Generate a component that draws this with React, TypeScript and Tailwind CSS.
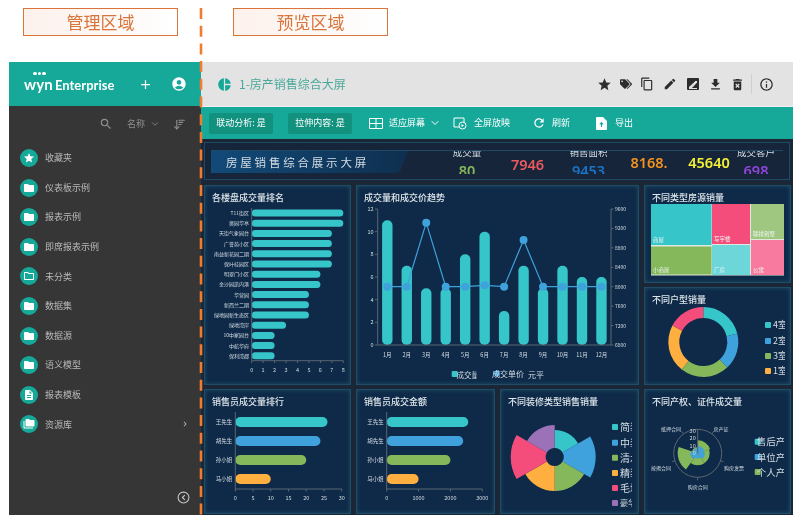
import type { ReactNode } from "react";
import {
  MdAdd,
  MdAccountCircle,
  MdSearch,
  MdStar,
  MdFolder,
  MdOutlineFolder,
  MdDescription,
  MdFolderCopy,
  MdPieChart,
  MdContentCopy,
  MdEdit,
  MdFileDownload,
  MdDeleteForever,
  MdInfoOutline,
  MdRefresh,
  MdChevronRight,
} from "react-icons/md";
import { FaTags } from "react-icons/fa";
import { ChevronDown, CircleChevronLeft, ArrowDownWideNarrow } from "lucide-react";

const TEAL = "#36c5c8";
const BLUE = "#3fa2dc";
const GREEN = "#85b85a";
const ORANGE = "#ffaf40";
const PINK = "#f54d7b";
const PURPLE = "#9b72b8";
const AXIS = "#5b6670";
const LABEL = "#d5dde4";

const sideItems = [
  { name: "收藏夹", icon: <MdStar size={12} /> },
  { name: "仪表板示例", icon: <MdFolder size={12} /> },
  { name: "报表示例", icon: <MdFolder size={12} /> },
  { name: "即席报表示例", icon: <MdFolder size={12} /> },
  { name: "未分类", icon: <MdOutlineFolder size={12} /> },
  { name: "数据集", icon: <MdFolder size={12} /> },
  { name: "数据源", icon: <MdFolder size={12} /> },
  { name: "语义模型", icon: <MdFolder size={12} /> },
  { name: "报表模板", icon: <MdDescription size={12} /> },
  { name: "资源库", icon: <MdFolderCopy size={12} />, arrow: true },
];

const Sidebar = () => (
  <aside className="w-[192px] bg-[#363636] flex flex-col">
    <div className="h-[44px] bg-[#16a899] flex items-center pl-[15px] text-white">
      <div className="w-[90px] flex items-end font-['Lato',sans-serif] font-bold leading-none relative">
        <span className="text-[15px] tracking-[0.2px]">wyn</span>
        <span className="text-[13px] ml-[2px] font-bold">Enterprise</span>
        <span className="absolute left-[9px] top-[-5px] flex gap-[1px]">
          <i className="w-[3.5px] h-[3.5px] rounded-full bg-white" />
          <i className="w-[3.5px] h-[3.5px] rounded-full bg-white" />
          <i className="w-[3.5px] h-[3.5px] rounded-full bg-white" />
        </span>
      </div>
      <MdAdd size={15} className="ml-[24px]" />
      <MdAccountCircle size={16} className="ml-[18px]" />
    </div>

    <div className="h-[36px] flex items-center text-[#8f8f8f] text-[9px] pl-[90px]">
      <MdSearch size={14} />
      <span className="ml-[14px]">名称</span>
      <ChevronDown size={10} className="ml-[5px]" />
      <ArrowDownWideNarrow size={13} className="ml-[13px]" />
    </div>

    <div className="flex flex-col pl-[11px] mt-[7px] gap-[11.6px]">
      {sideItems.map((item) => (
        <div key={item.name} className="h-[18px] flex items-center text-[9px] text-[#b9b9b9]">
          <span className="w-[18px] h-[18px] rounded-full bg-[#16a899] text-white flex items-center justify-center">
            {item.icon}
          </span>
          <span className="ml-[7px]">{item.name}</span>
          {item.arrow && <MdChevronRight size={10} className="ml-auto mr-[11px]" />}
        </div>
      ))}
    </div>

    <div className="mt-auto flex justify-end pr-[11px] pb-[11px] text-[#c5c5c5]">
      <CircleChevronLeft size={13} />
    </div>
  </aside>
);

const TopBar = () => (
  <div className="h-[44px] bg-[#e3e3e3] flex items-center pl-[16px] text-[#2d2d2d]">
    <MdPieChart size={15} className="text-[#16a899]" />
    <span className="ml-[7px] text-[12px] text-[#4aa99c]">1-房产销售综合大屏</span>
    <div className="ml-auto flex items-center pr-[19px]">
      <MdStar size={15} />
      <FaTags size={12} className="ml-[8px]" />
      <MdContentCopy size={14} className="ml-[8px]" />
      <MdEdit size={14} className="ml-[9px]" />
      <svg width="12" height="12" viewBox="0 0 12 12" className="ml-[10px]">
        <rect width="12" height="12" rx="1" fill="#2d2d2d" />
        <path d="M2 9.5 9 3l1 1-5 5.5zM2 10.5h8" stroke="#e3e3e3" strokeWidth="1" fill="#e3e3e3" />
      </svg>
      <MdFileDownload size={15} className="ml-[9px]" />
      <MdDeleteForever size={15} className="ml-[7px]" />
      <span className="w-px h-[20px] bg-[#cfcfcf] ml-[6px]" />
      <MdInfoOutline size={15} className="ml-[7px]" />
    </div>
  </div>
);

const ToolButton = ({ text }: { text: string }) => (
  <span className="h-[21px] w-[64px] rounded-[2px] bg-[#12917f] flex items-center justify-center text-[9px] text-white">
    {text}
  </span>
);

const ToolBar = () => (
  <div className="h-[33px] bg-[#16a899] flex items-center pl-[8px] text-white text-[9px] border-t border-[#f0f0f0]">
    <ToolButton text="联动分析: 是" />
    <span className="ml-[15px]">
      <ToolButton text="拉伸内容: 是" />
    </span>
    <svg width="14" height="11" viewBox="0 0 14 11" fill="none" stroke="white" className="ml-[17px]">
      <path d="M.5.5h13v10H.5zM.5 5.5h13M7 .5v10" strokeWidth="1" />
    </svg>
    <span className="ml-[6px]">适应屏幕</span>
    <ChevronDown size={12} className="ml-[4px]" />
    <svg width="14" height="14" viewBox="0 0 14 14" fill="none" stroke="white" className="ml-[12px]">
      <path d="M6 11H1V2h10v4" strokeWidth="1" />
      <circle cx="9.5" cy="9.5" r="3.5" strokeWidth="1" />
      <path d="M8.5 8v3l2.5-1.5z" fill="white" stroke="none" />
    </svg>
    <span className="ml-[7px]">全屏放映</span>
    <MdRefresh size={14} className="ml-[22px]" />
    <span className="ml-[6px]">刷新</span>
    <svg width="11" height="13" viewBox="0 0 11 13" className="ml-[26px]">
      <path d="M0 1q0-1 1-1h6l4 4v8q0 1-1 1H1q-1 0-1-1z" fill="white" />
      <path d="M5.5 10V6M3.8 7.5 5.5 5.5l1.7 2" stroke="#16a899" strokeWidth="1.1" fill="none" />
    </svg>
    <span className="ml-[8px]">导出</span>
  </div>
);

const Stat = ({ w, label, value, color, big }: { w: string; label?: string; value: string; color: string; big?: boolean }) => (
  <div className={`${w} flex flex-col items-center shrink-0`}>
    {label ? (
      <>
        <span className="text-[9.5px] leading-[9px] mt-[-3px] whitespace-nowrap text-[#d5dde4]">{label}</span>
        <span className="text-[14.5px] leading-[14px] mt-[6px] font-semibold" style={{ color }}>
          {value}
        </span>
      </>
    ) : (
      <span className={`text-[14.5px] leading-[16px] font-semibold ${big ? "mt-[3px]" : "mt-[5px]"}`} style={{ color }}>
        {value}
      </span>
    )}
  </div>
);

const Banner = () => (
  <div className="h-[38px] border border-[#1e4a66] bg-[#16253a] px-[6px] pt-[7px] relative">
    <div className="border-t border-[#1e4a66] h-[24px] flex overflow-hidden">
      <div className="relative w-[197px] h-[24px] shrink-0 flex items-center pl-[15px] text-[11.5px] tracking-[2.8px] text-[#d5dde4]">
        <svg viewBox="0 0 197 24" width="197" height="24" className="absolute left-0 top-0">
          <defs>
            <linearGradient id="bannerFill" x1="0" x2="1" y1="0" y2="0">
              <stop offset="0" stopColor="#124a78" />
              <stop offset="1" stopColor="#0f2f4f" />
            </linearGradient>
          </defs>
          <path d="M0 0h197l-7 18q-2 4-7 4H0z" fill="url(#bannerFill)" />
        </svg>
        <span className="relative">房屋销售综合展示大屏</span>
      </div>
      <div className="flex pl-[29px] font-['Noto_Sans','Noto_Sans_CJK_SC',sans-serif]">
        <Stat w="w-[60px]" label="成交量" value="80" color={GREEN} />
        <Stat w="w-[61px]" value="7946" color="#ea5a5f" />
        <Stat w="w-[61px]" label="销售面积" value="9453" color="#1a74c8" />
        <Stat w="w-[60px]" value="8168." color="#f5911e" big />
        <Stat w="w-[60px]" value="45640" color="#f4f034" big />
        <Stat w="w-[34px]" label="成交客户" value="698" color="#9044d8" />
      </div>
    </div>
  </div>
);

type Box = [number, number, number, number];

const Panel = ({ box, title, children }: { box: Box; title: string; children: ReactNode }) => {
  const [x, y, w, h] = box;
  return (
    <div
      className="border border-[#1f4d68] bg-[#0e2a48] flex flex-col shadow-[inset_0_0_4px_#1f5068] overflow-hidden shrink-0"
      style={{ width: w, height: h }}
    >
      <div className="h-[22px] shrink-0 pl-[7px] pt-[6px] text-[9px] leading-[12px] font-medium text-[#dfe6ea]">{title}</div>
      <svg width={w - 2} height={h - 24} viewBox={`${x + 1} ${y + 23} ${w - 2} ${h - 24}`} className="block overflow-visible">
        {children}
      </svg>
    </div>
  );
};

const hbar = (x0: number, y: number, w: number, h: number, color: string) => (
  <rect x={x0} y={y - h / 2} width={w} height={h} rx={h / 2} fill={color} />
);

const rankNames = [
  "T11街区", "奥园华亭", "天街气象园台", "广誉苑小区", "南益新花园二期", "保叶桂园区", "明翠门小区", "金沙园凯内港",
  "华营园", "新西兰二期", "绿地园新生态区", "绿地湾岸", "10中家园台", "中航华府", "保利湾郡",
];
const rankValues = [8, 8, 7, 7, 7, 7, 6, 6, 5, 5, 5, 3, 2, 2, 2];

const RankChart = () => (
  <Panel box={[204, 185, 147, 200]} title="各楼盘成交量排名">
    {rankValues.map((v, i) => {
      const y = 213 + i * 10.2;
      return (
        <g key={i}>
          <text x={249} y={y + 2} textAnchor="end" fontSize="5" fill={LABEL}>{rankNames[i]}</text>
          {hbar(251.7, y, v * 11.45, 7, TEAL)}
        </g>
      );
    })}
    <line x1={251.7} y1={360.7} x2={343.3} y2={360.7} stroke={AXIS} />
    <line x1={251.7} y1={208} x2={251.7} y2={360.7} stroke={AXIS} />
    {Array.from({ length: 9 }, (_, i) => (
      <g key={i}>
        <line x1={251.7 + i * 11.45} y1={360.7} x2={251.7 + i * 11.45} y2={363} stroke={AXIS} />
        <text x={251.7 + i * 11.45} y={372} textAnchor="middle" fontSize="5.5" fill={LABEL}>{i}</text>
      </g>
    ))}
  </Panel>
);

const trendBars = [11, 7, 5, 5, 8, 10, 3, 7, 5, 7, 6, 6];
const trendLine = [286.7, 286.7, 222.7, 286.7, 286.7, 285.3, 286.7, 240, 286.7, 286.7, 286.7, 286.7];

const TrendChart = () => {
  const cx = (i: number) => 387.3 + i * 19.47;
  const unit = (345 - 209) / 12;
  return (
    <Panel box={[356, 185, 283, 200]} title="成交量和成交价趋势">
      {trendBars.map((v, i) => (
        <rect key={i} x={cx(i) - 5.2} y={345 - v * unit} width={10.4} height={v * unit} rx={5} fill={TEAL} />
      ))}
      <polyline points={trendLine.map((y, i) => `${cx(i)},${y}`).join(" ")} fill="none" stroke={BLUE} strokeWidth="1.2" />
      {trendLine.map((y, i) => (
        <circle key={i} cx={cx(i)} cy={y} r={4} fill={BLUE} />
      ))}
      <path d="M377.7 209V345H611V209" fill="none" stroke={AXIS} />
      {Array.from({ length: 7 }, (_, i) => (
        <g key={i}>
          <line x1={375} x2={377.7} y1={345 - i * 2 * unit} y2={345 - i * 2 * unit} stroke={AXIS} />
          <text x={373.5} y={347 - i * 2 * unit} textAnchor="end" fontSize="5.5" fill={LABEL}>{i * 2}</text>
        </g>
      ))}
      {["6800", "7200", "7600", "8000", "8400", "8800", "9200", "9600"].map((t, i) => (
        <g key={t}>
          <line x1={611} x2={613.5} y1={345 - (i * 136) / 7} y2={345 - (i * 136) / 7} stroke={AXIS} />
          <text x={615} y={347 - (i * 136) / 7} fontSize="5" fill={LABEL}>{t}</text>
        </g>
      ))}
      {trendBars.map((_, i) => (
        <text key={i} x={cx(i)} y={357} textAnchor="middle" fontSize="5.5" fill={LABEL}>{i + 1}月</text>
      ))}
      <rect x={451.7} y={371} width={6} height={6} rx={1} fill={TEAL} />
      <text x={456.5} y={377.5} fontSize="7.5" fill={LABEL}>成交量</text>
      <rect x={476.5} y={368} width={14} height={12} fill="#0e2a48" />
      <circle cx={497} cy={373.5} r={3} fill={BLUE} />
      <text x={492} y={377} fontSize="8" fill={LABEL}>成交单价</text>
      <text x={528} y={377.5} fontSize="8" fill={LABEL}>元平</text>
    </Panel>
  );
};

const TreeCell = ({ x, y, w, h, color, label }: { x: number; y: number; w: number; h: number; color: string; label: string }) => (
  <g>
    <rect x={x} y={y} width={w} height={h} fill={color} />
    <text x={x + 2} y={y + h - 3} fontSize="5.5" fill="#eef5f5">{label}</text>
  </g>
);

const TreeChart = () => (
  <Panel box={[644, 185, 147, 98]} title="不同类型房源销量">
    <rect x={651} y={204} width={133} height={71.5} fill="#dfe8dd" />
    <TreeCell x={651} y={204} w={60.5} h={41} color={TEAL} label="商屋" />
    <TreeCell x={651} y={246.5} w={60.5} h={28} color={GREEN} label="小商屋" />
    <TreeCell x={712} y={204} w={38} h={40} color={PINK} label="写字楼" />
    <TreeCell x={712} y={245} w={38} h={30} color="#6cd6d8" label="厂房" />
    <TreeCell x={751} y={204} w={33} h={35} color="#a0c77f" label="联排别墅" />
    <TreeCell x={751} y={240} w={33} h={35} color="#f87a9e" label="公寓" />
  </Panel>
);

const polar = (cx: number, cy: number, r: number, deg: number) => {
  const a = ((deg - 90) * Math.PI) / 180;
  return [cx + r * Math.cos(a), cy + r * Math.sin(a)];
};

const sector = (cx: number, cy: number, r0: number, r1: number, a0: number, a1: number) => {
  const [x1, y1] = polar(cx, cy, r1, a0);
  const [x2, y2] = polar(cx, cy, r1, a1);
  const [x3, y3] = polar(cx, cy, r0, a1);
  const [x4, y4] = polar(cx, cy, r0, a0);
  return `M${x1} ${y1}A${r1} ${r1} 0 0 1 ${x2} ${y2}L${x3} ${y3}A${r0} ${r0} 0 0 0 ${x4} ${y4}Z`;
};

const Legend = ({ x, y, color, text, clip, size = 8, dx = 8 }: { x: number; y: number; color: string; text: string; clip: number; size?: number; dx?: number }) => (
  <g>
    <rect x={x} y={y - 3} width={6} height={6} rx={1} fill={color} />
    <svg x={x} y={y - 8} width={clip - x} height={16} viewBox={`${x} ${y - 8} ${clip - x} 16`}>
      <text x={x + dx} y={y + size * 0.38} fontSize={size} fill={LABEL}>{text}</text>
    </svg>
  </g>
);

const DonutChart = () => (
  <Panel box={[644, 287, 147, 98]} title="不同户型销量">
    <path d={sector(703.3, 342, 24, 35, 0, 76)} fill={TEAL} />
    <path d={sector(703.3, 342, 24, 35, 76, 137)} fill={BLUE} />
    <path d={sector(703.3, 342, 24, 35, 137, 218)} fill={GREEN} />
    <path d={sector(703.3, 342, 24, 35, 218, 298)} fill={ORANGE} />
    <path d={sector(703.3, 342, 24, 35, 298, 360)} fill={PINK} />
    <Legend x={765} y={325} color={TEAL} text="4室" clip={785} size={9} />
    <Legend x={765} y={341} color={BLUE} text="2室" clip={785} size={9} />
    <Legend x={765} y={356} color={GREEN} text="3室" clip={785} size={9} />
    <Legend x={765} y={371} color={ORANGE} text="1室" clip={785} size={9} />
  </Panel>
);

const salesNames = ["王先生", "胡先生", "孙小姐", "马小姐"];
const salesColors = [TEAL, BLUE, GREEN, ORANGE];

const SalesChart = ({ box, title, x0, x1, values, ticks, max }: { box: Box; title: string; x0: number; x1: number; values: number[]; ticks: number[]; max: number }) => (
  <Panel box={box} title={title}>
    {values.map((v, i) => {
      const y = 422 + i * 19;
      return (
        <g key={i}>
          <text x={x0 - 3} y={y + 2} textAnchor="end" fontSize="5.5" fill={LABEL}>{salesNames[i]}</text>
          {hbar(x0, y, (v / max) * (x1 - x0), 10, salesColors[i])}
        </g>
      );
    })}
    <path d={`M${x0} 412V489H${x1}`} fill="none" stroke={AXIS} />
    {ticks.map((t) => {
      const x = x0 + (t / max) * (x1 - x0);
      return (
        <g key={t}>
          <line x1={x} x2={x} y1={489} y2={491.5} stroke={AXIS} />
          <text x={x} y={500} textAnchor="middle" fontSize="5.5" fill={LABEL}>{t}</text>
        </g>
      );
    })}
  </Panel>
);

const RoseChart = () => (
  <Panel box={[500, 389, 139, 125]} title="不同装修类型销售销量">
    <path d={sector(554.7, 457, 9, 27, 0, 60)} fill={TEAL} />
    <path d={sector(554.7, 457, 9, 41, 60, 120)} fill={BLUE} />
    <path d={sector(554.7, 457, 9, 34, 120, 180)} fill={GREEN} />
    <path d={sector(554.7, 457, 9, 34, 180, 240)} fill={ORANGE} />
    <path d={sector(554.7, 457, 9, 44, 240, 300)} fill={PINK} />
    <path d={sector(554.7, 457, 9, 32, 300, 360)} fill={PURPLE} />
    <Legend x={612} y={427} color={TEAL} text="简装" clip={632} size={10} />
    <Legend x={612} y={442.7} color={BLUE} text="中装" clip={632} size={10} />
    <Legend x={612} y={457.7} color={GREEN} text="清水" clip={632} size={10} />
    <Legend x={612} y={473} color={ORANGE} text="精装" clip={632} size={10} />
    <Legend x={612} y={488} color={PINK} text="毛坯" clip={632} size={10} />
    <Legend x={612} y={503} color={PURPLE} text="豪华" clip={632} size={8} />
  </Panel>
);

const PolarChart = () => {
  const c: [number, number] = [697.7, 453.3];
  const labels: [number, number, string][] = [
    [721, 431, "房产证"],
    [734, 470, "购房发票"],
    [697.7, 489, "购房合同"],
    [661, 470, "按揭合同"],
    [671, 431, "抵押合同"],
  ];
  const green = [13, 12, 12, 20, 6];
  const blue = [7, 7, 5, 7, 5];
  return (
    <Panel box={[644, 389, 147, 125]} title="不同产权、证件成交量">
      <circle cx={c[0]} cy={c[1]} r={24} fill="none" stroke={AXIS} />
      {[0, 72, 144, 216, 288].map((a, i) => {
        const [x1, y1] = polar(c[0], c[1], 24, a + 36);
        const [x2, y2] = polar(c[0], c[1], 27, a + 36);
        return (
          <g key={a}>
            <line x1={x1} y1={y1} x2={x2} y2={y2} stroke={AXIS} />
            <path d={sector(c[0], c[1], 0.1, green[i], a, a + 72)} fill={GREEN} />
            <path d={sector(c[0], c[1], 0.1, blue[i], a, a + 72)} fill={BLUE} />
          </g>
        );
      })}
      <line x1={c[0]} y1={c[1]} x2={c[0]} y2={c[1] - 24} stroke={AXIS} />
      {["0", "10", "20", "30"].map((t, i) => (
        <text key={t} x={c[0] - 2} y={c[1] + 2 - i * 7.6} textAnchor="end" fontSize="5.5" fill={LABEL}>{t}</text>
      ))}
      {labels.map(([x, y, t]) => (
        <text key={t} x={x} y={y} textAnchor="middle" fontSize="5" fill={LABEL}>{t}</text>
      ))}
      <Legend x={754.7} y={441.7} color={TEAL} text="售后产权" clip={784} size={9.5} dx={2} />
      <Legend x={754.7} y={457} color={BLUE} text="单位产权" clip={784} size={9.5} dx={2} />
      <Legend x={754.7} y={472} color={GREEN} text="个人产权" clip={784} size={9.5} dx={2} />
    </Panel>
  );
};

const Dashboard = () => (
  <div className="h-[376px] bg-[#1b2636] pl-[3px] pt-[3px] pr-[3px] flex flex-col">
    <Banner />
    <div className="flex gap-[5px] mt-[5px]">
      <RankChart />
      <TrendChart />
      <div className="flex flex-col gap-[4px]">
        <TreeChart />
        <DonutChart />
      </div>
    </div>
    <div className="flex gap-[5px] mt-[4px]">
      <SalesChart box={[204, 389, 147, 125]} title="销售员成交量排行" x0={235.3} x1={341.7} values={[26, 24, 20, 10]} ticks={[0, 5, 10, 15, 20, 25, 30]} max={30} />
      <SalesChart box={[356, 389, 139, 125]} title="销售员成交金额" x0={386.7} x1={482.3} values={[2560, 2400, 2000, 1000]} ticks={[0, 1000, 2000, 3000]} max={3000} />
      <RoseChart />
      <PolarChart />
    </div>
  </div>
);

const AreaLabel = ({ text }: { text: string }) => (
  <div className="w-[155px] h-[28px] border border-[#d9743a] bg-gradient-to-r from-[#fdf1ec] to-white flex items-center justify-center text-[17px] text-[#d9743a]">
    {text}
  </div>
);

export default function App() {
  return (
    <div className="relative w-[796px] h-[520px] bg-white overflow-hidden blur-[0.35px] font-['Noto_Sans_CJK_SC','Noto_Sans',sans-serif]">
      <div className="flex pt-[8px] pl-[23px] gap-[55px]">
        <AreaLabel text="管理区域" />
        <AreaLabel text="预览区域" />
      </div>
      <div className="flex w-[784px] h-[453px] ml-[9px] mt-[26px]">
        <Sidebar />
        <div className="w-[592px] flex flex-col">
          <TopBar />
          <ToolBar />
          <Dashboard />
        </div>
      </div>
      {/* dashed divider drawn over the page */}
      <svg width="4" height="512" className="absolute left-[199px] top-[8px]">
        <line x1="2" y1="0" x2="2" y2="512" stroke="#ed7d31" strokeWidth="2.6" strokeDasharray="11 6.7" />
      </svg>
    </div>
  );
}
